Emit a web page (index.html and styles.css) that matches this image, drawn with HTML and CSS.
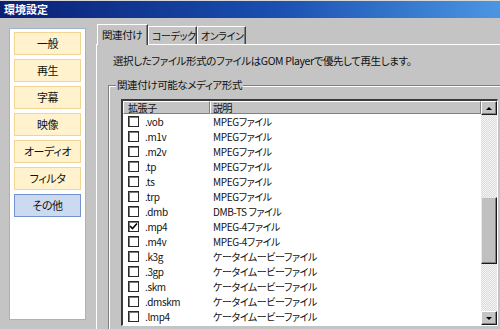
FILE: index.html
```html
<!DOCTYPE html>
<html lang="ja">
<head>
    <meta charset="UTF-8">
    <title>環境設定</title>
    <link rel="stylesheet" href="styles.css">
</head>
<body>
    <div class="titlebar">環境設定</div>
    <div class="main">
        <div class="sidebar">
            <div class="nav-btn">一般</div>
            <div class="nav-btn">再生</div>
            <div class="nav-btn">字幕</div>
            <div class="nav-btn">映像</div>
            <div class="nav-btn">オーディオ</div>
            <div class="nav-btn">フィルタ</div>
            <div class="nav-btn active">その他</div>
        </div>
        <div class="tabarea">
            <div class="tabs">
                <div class="tab active">関連付け</div>
                <div class="tab tab-codec">コーデック</div>
                <div class="tab tab-online">オンライン</div>
            </div>
            <div class="panel">
                <p class="info">選択したファイル形式のファイルはGOM Playerで優先して再生します。</p>
                <div class="group">
                    <div class="group-title">関連付け可能なメディア形式</div>
                    <div class="list">
                        <div class="list-body">
                            <div class="list-head">
                                <span class="col-ext">拡張子</span>
                                <span class="col-desc">説明</span>
                            </div>
                            <div class="row"><span class="check"></span><span class="ext">.vob</span><span class="desc">MPEGファイル</span></div>
                            <div class="row"><span class="check"></span><span class="ext">.m1v</span><span class="desc">MPEGファイル</span></div>
                            <div class="row"><span class="check"></span><span class="ext">.m2v</span><span class="desc">MPEGファイル</span></div>
                            <div class="row"><span class="check"></span><span class="ext">.tp</span><span class="desc">MPEGファイル</span></div>
                            <div class="row"><span class="check"></span><span class="ext">.ts</span><span class="desc">MPEGファイル</span></div>
                            <div class="row"><span class="check"></span><span class="ext">.trp</span><span class="desc">MPEGファイル</span></div>
                            <div class="row"><span class="check"></span><span class="ext">.dmb</span><span class="desc">DMB-TS ファイル</span></div>
                            <div class="row">
                                <span class="check">
                                    <svg width="9" height="9" viewBox="0 0 9 9"><path d="M1 4 L3.5 6.5 L8 1.5" fill="none" stroke="#000" stroke-width="1.6"/></svg>
                                </span>
                                <span class="ext">.mp4</span><span class="desc">MPEG-4ファイル</span>
                            </div>
                            <div class="row"><span class="check"></span><span class="ext">.m4v</span><span class="desc">MPEG-4ファイル</span></div>
                            <div class="row"><span class="check"></span><span class="ext">.k3g</span><span class="desc">ケータイムービーファイル</span></div>
                            <div class="row"><span class="check"></span><span class="ext">.3gp</span><span class="desc">ケータイムービーファイル</span></div>
                            <div class="row"><span class="check"></span><span class="ext">.skm</span><span class="desc">ケータイムービーファイル</span></div>
                            <div class="row"><span class="check"></span><span class="ext">.dmskm</span><span class="desc">ケータイムービーファイル</span></div>
                            <div class="row"><span class="check"></span><span class="ext">.lmp4</span><span class="desc">ケータイムービーファイル</span></div>
                        </div>
                        <div class="scrollbar">
                            <div class="sb-btn"><span class="arrow-up"></span></div>
                            <div class="sb-track"><div class="sb-thumb"></div></div>
                            <div class="sb-btn"><span class="arrow-down"></span></div>
                        </div>
                    </div>
                </div>
            </div>
        </div>
    </div>
</body>
</html>
```

FILE: styles.css
```css
* {
    box-sizing: border-box;
}
body {
    margin: 0;
    width: 500px;
    height: 329px;
    overflow: hidden;
    background-color: #c4c4c4;
    font-family: "Noto Sans CJK JP", sans-serif;
    font-size: 10px;
    letter-spacing: -0.4px;
    font-feature-settings: "palt";
    color: #111;
}
.titlebar {
    height: 18px;
    padding-left: 4px;
    line-height: 17px;
    font-size: 11px;
    font-weight: bold;
    letter-spacing: 0;
    color: #fff;
    background: linear-gradient(to right, #0a1f74, #1a4fb0 55%, #4b96e2);
    border-top: 1px solid #d8d8d8;
}
.main {
    display: flex;
    align-items: flex-start;
    padding-left: 9px;
}
.sidebar {
    flex-shrink: 0;
    margin-top: 10px;
    width: 77px;
    height: 292px;
    padding: 3px 4px;
    display: flex;
    flex-direction: column;
    gap: 4px;
    background-color: #fff;
    border: 1px solid #9fb2d2;
}
.nav-btn {
    height: 23px;
    line-height: 21px;
    text-align: center;
    font-size: 11px;
    background-color: #fff2cc;
    border: 1px solid #f3d593;
}
.nav-btn.active {
    background-color: #cbdaf1;
    border-color: #7393cf;
}
.tabarea {
    flex-shrink: 0;
    margin-left: 10px;
    margin-top: 6px;
    width: 404px;
    overflow: hidden;
}
.tabs {
    display: flex;
    align-items: flex-end;
    height: 20px;
    padding-left: 1px;
    position: relative;
    z-index: 1;
}
.tab {
    flex-shrink: 0;
    height: 18px;
    padding-left: 3px;
    line-height: 17px;
    font-size: 10px;
    border-top: 1px solid #fff;
    border-left: 1px solid #fff;
    border-right: 1px solid #404040;
    box-shadow: inset -1px 0 #808080;
    background-color: #c4c4c4;
    white-space: nowrap;
}
.tab.active {
    width: 51px;
    height: 21px;
    margin-bottom: -1px;
    padding-left: 4px;
    line-height: 19px;
    font-size: 10.5px;
}
.tab-codec {
    width: 49px;
}
.tab-online {
    width: 49px;
}
.panel {
    height: 290px;
    padding: 9px 0 0 11px;
    border-top: 1px solid #fff;
    border-left: 1px solid #fff;
}
.info {
    margin: 0 0 0 5px;
    line-height: 14px;
    font-size: 10.5px;
    white-space: nowrap;
}
.group {
    position: relative;
    margin-top: 17px;
    width: 420px;
    height: 260px;
    padding: 13px 0 0 12px;
    border: 1px solid #808080;
    box-shadow: inset 1px 1px #fff, 1px 1px #fff;
}
.group-title {
    position: absolute;
    top: -8px;
    left: 7px;
    padding: 0 1px;
    line-height: 14px;
    font-size: 10.5px;
    background-color: #c4c4c4;
}
.list {
    display: flex;
    width: 377px;
    height: 227px;
    background-color: #fff;
    border-top: 2px solid #3a3a3a;
    border-left: 2px solid #3a3a3a;
    border-right: 1px solid #fff;
    border-bottom: 1px solid #fff;
}
.list-body {
    flex: 1;
    overflow: hidden;
}
.list-head {
    display: flex;
    height: 13px;
    line-height: 11px;
    background-color: #c4c4c4;
}
.list-head span {
    border-top: 1px solid #fff;
    border-left: 1px solid #fff;
    border-right: 1px solid #808080;
    border-bottom: 1px solid #808080;
}
.col-ext {
    width: 87px;
    padding-left: 4px;
}
.col-desc {
    flex: 1;
    padding-left: 2px;
}
.row {
    display: flex;
    align-items: center;
    height: 15px;
    padding-left: 5px;
    white-space: nowrap;
}
.check {
    display: flex;
    align-items: center;
    justify-content: center;
    width: 11px;
    height: 11px;
    margin-right: 6px;
    border: 1px solid #2a2a2a;
    box-shadow: inset 1px 1px #7a7a7a;
    background-color: #fff;
}
.ext {
    width: 68px;
}
.scrollbar {
    width: 16px;
    display: flex;
    flex-direction: column;
}
.sb-btn {
    height: 14px;
    display: flex;
    align-items: center;
    justify-content: center;
    background-color: #c4c4c4;
    border: 1px solid;
    border-color: #fff #1a1a1a #1a1a1a #fff;
    box-shadow: inset -1px -1px #808080;
}
.arrow-up {
    border-left: 3px solid transparent;
    border-right: 3px solid transparent;
    border-bottom: 3px solid #000;
}
.arrow-down {
    border-left: 3px solid transparent;
    border-right: 3px solid transparent;
    border-top: 3px solid #000;
}
.sb-track {
    flex: 1;
    padding-top: 82px;
    background: repeating-conic-gradient(#dcdcdc 0 25%, #f4f4f4 0 50%) 0 0 / 2px 2px;
}
.sb-thumb {
    height: 67px;
    background-color: #c0c0c0;
    border: 1px solid;
    border-color: #e8e8e8 #1a1a1a #1a1a1a #e8e8e8;
    box-shadow: inset -1px -1px #808080;
}
```
